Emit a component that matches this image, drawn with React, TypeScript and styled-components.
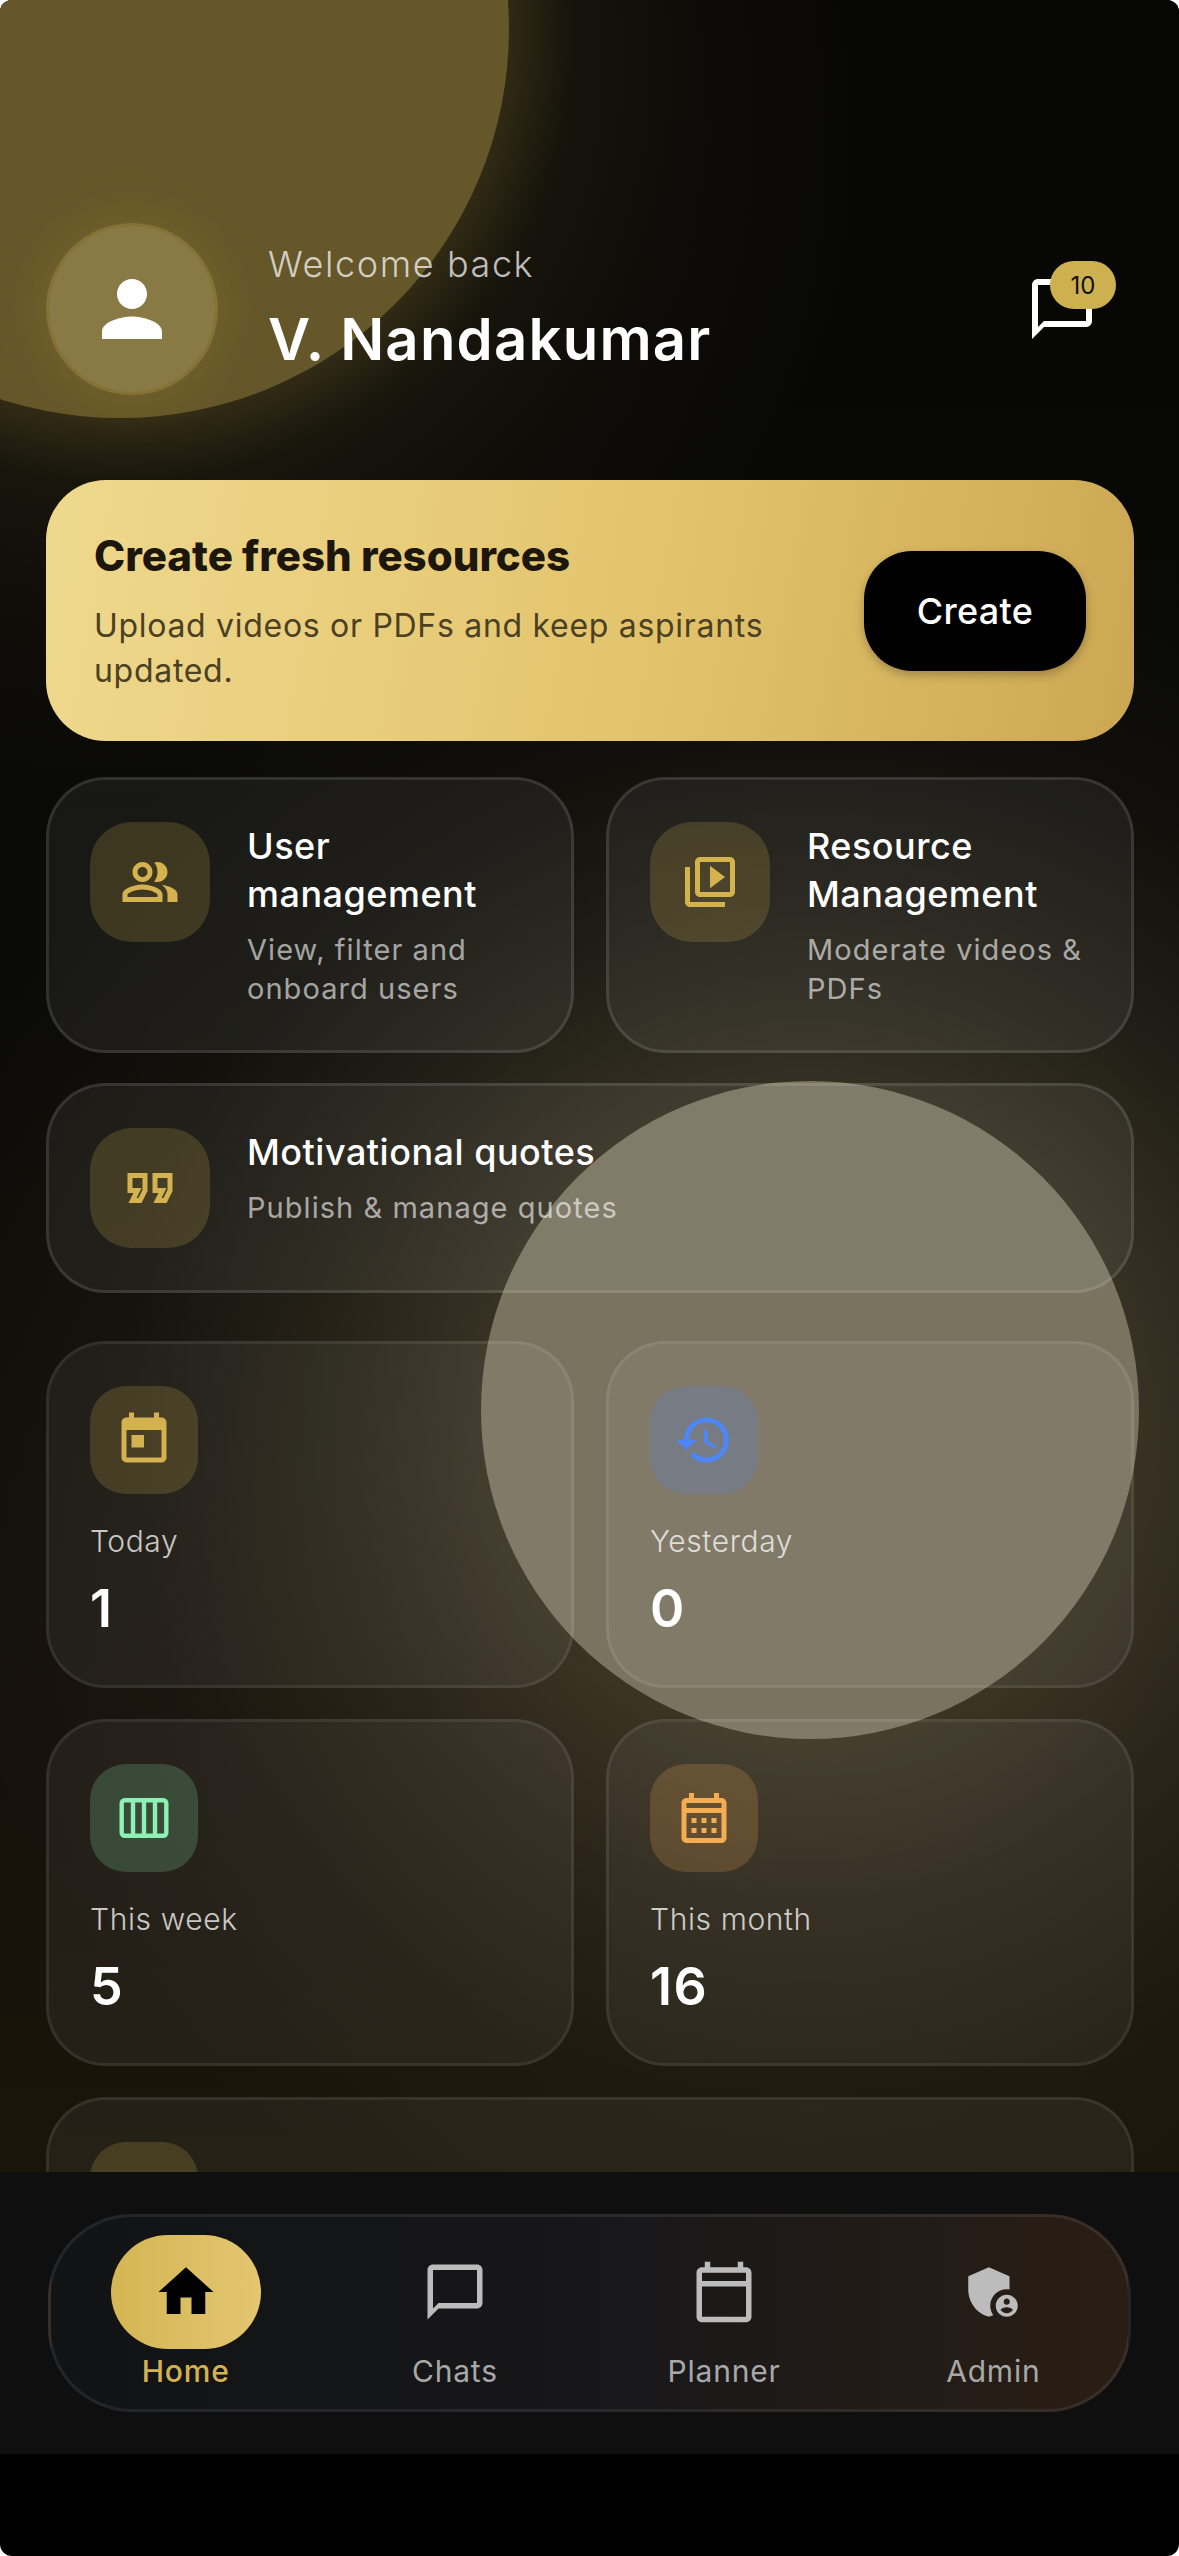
import React from 'react'
import styled, { createGlobalStyle } from 'styled-components'
import {
  MdAdminPanelSettings,
  MdChatBubbleOutline,
  MdHistory,
  MdHome,
  MdOutlineCalendarMonth,
  MdOutlineCalendarToday,
  MdOutlineFormatQuote,
  MdOutlinePeopleAlt,
  MdOutlineVideoLibrary,
  MdPerson,
  MdToday,
} from 'react-icons/md'

const Colors = {
  Gold: '#d4b24f',
  Blue: '#4f86f7',
  Green: '#8df0b4',
  Orange: '#f4ad53',
}

const GlobalStyle = createGlobalStyle`
  html, body {
    margin: 0;
    padding: 0;
    background: #fff;
  }
  * {
    box-sizing: border-box;
  }
`

function WeekIcon() {
  return (
    <svg width="60" height="60" viewBox="0 0 60 60" fill="none" stroke="currentColor" strokeWidth="4.4">
      <rect x="7.7" y="12.2" width="44.6" height="35.6" rx="3" />
      <path d="M19 12v36M30 12v36M41 12v36" />
    </svg>
  )
}

function FeatureCard({ icon, title, text, wide }: { icon: React.ReactNode; title: React.ReactNode; text: React.ReactNode; wide?: boolean }) {
  return (
    <Feature $wide={wide}>
      <FeatureChip>{icon}</FeatureChip>
      <div>
        <FeatureTitle>{title}</FeatureTitle>
        <FeatureText>{text}</FeatureText>
      </div>
    </Feature>
  )
}

function StatCard({ icon, tone, label, value }: { icon: React.ReactNode; tone: string; label: string; value: string }) {
  return (
    <Stat>
      <StatChip $tone={tone}>{icon}</StatChip>
      <StatLabel>{label}</StatLabel>
      <StatValue>{value}</StatValue>
    </Stat>
  )
}

export default function App() {
  return (
    <Phone>
      <GlobalStyle />
      <Screen>
        <TopCircle />
        <MiddleCircle />
        <Header>
          <Avatar>
            <MdPerson size={90} color="#fff" />
          </Avatar>
          <Greeting>
            <Welcome>Welcome back</Welcome>
            <Name>V. Nandakumar</Name>
          </Greeting>
          <Inbox>
            <MdChatBubbleOutline size={72} color="#fff" />
            <Badge>10</Badge>
          </Inbox>
        </Header>

        <Hero>
          <div>
            <HeroTitle>Create fresh resources</HeroTitle>
            <HeroText>Upload videos or PDFs and keep aspirants updated.</HeroText>
          </div>
          <CreateButton>Create</CreateButton>
        </Hero>

        <FeatureGrid>
          <FeatureCard
            icon={<MdOutlinePeopleAlt size={60} />}
            title={<>User<br />management</>}
            text={<>View, filter and<br />onboard users</>}
          />
          <FeatureCard
            icon={<MdOutlineVideoLibrary size={60} />}
            title={<>Resource<br />Management</>}
            text={<>Moderate videos &amp;<br />PDFs</>}
          />
          <FeatureCard
            wide
            icon={<MdOutlineFormatQuote size={60} />}
            title="Motivational quotes"
            text="Publish & manage quotes"
          />
        </FeatureGrid>

        <StatGrid>
          <StatCard icon={<MdToday size={60} />} tone={Colors.Gold} label="Today" value="1" />
          <StatCard icon={<MdHistory size={60} />} tone={Colors.Blue} label="Yesterday" value="0" />
          <StatCard icon={<WeekIcon />} tone={Colors.Green} label="This week" value="5" />
          <StatCard icon={<MdOutlineCalendarMonth size={60} />} tone={Colors.Orange} label="This month" value="16" />
          <StatWide>
            <StatChip $tone={Colors.Gold} />
          </StatWide>
        </StatGrid>
      </Screen>

      <NavBar>
        <NavPill>
          <NavItem $active>
            <NavIcon $active>
              <MdHome size={66} />
            </NavIcon>
            <NavLabel>Home</NavLabel>
          </NavItem>
          <NavItem>
            <NavIcon>
              <MdChatBubbleOutline size={66} />
            </NavIcon>
            <NavLabel>Chats</NavLabel>
          </NavItem>
          <NavItem>
            <NavIcon>
              <MdOutlineCalendarToday size={66} />
            </NavIcon>
            <NavLabel>Planner</NavLabel>
          </NavItem>
          <NavItem>
            <NavIcon>
              <MdAdminPanelSettings size={66} />
            </NavIcon>
            <NavLabel>Admin</NavLabel>
          </NavItem>
        </NavPill>
      </NavBar>
    </Phone>
  )
}

const Phone = styled.div`
  display: flex;
  flex-direction: column;
  width: 1179px;
  height: 2556px;
  overflow: hidden;
  border-radius: 12px;
  background: #000;
  font-family: Inter, 'Liberation Sans', sans-serif;
`

const Screen = styled.main`
  position: relative;
  display: flex;
  flex-direction: column;
  flex: none;
  height: 2172px;
  padding: 223px 45px 0 46px;
  overflow: hidden;
  background:
    radial-gradient(
      circle 780px at 120px 30px,
      rgba(212, 178, 79, 0.2) 50%,
      rgba(212, 178, 79, 0.08) 58%,
      rgba(212, 178, 79, 0.03) 74%,
      rgba(212, 178, 79, 0) 100%
    ),
    radial-gradient(
      circle 900px at 809px 1410px,
      rgba(205, 185, 135, 0.21) 36%,
      rgba(205, 185, 135, 0.11) 56%,
      rgba(205, 185, 135, 0.035) 76%,
      rgba(205, 185, 135, 0) 100%
    ),
    linear-gradient(180deg, #060605 0%, #0a0a07 45%, #15110a 80%, #1a150a 100%);

  & > *:not(:nth-child(-n + 2)) {
    position: relative;
    flex: none;
  }
`

const TopCircle = styled.div`
  position: absolute;
  top: -360px;
  left: -269px;
  width: 778px;
  height: 778px;
  border-radius: 50%;
  background: #655729;
`

const MiddleCircle = styled.div`
  position: absolute;
  top: 1081px;
  left: 481px;
  width: 658px;
  height: 658px;
  border-radius: 50%;
  background: #7a7360;
`

const Header = styled.header`
  display: flex;
  align-items: center;
  height: 172px;
`

const Avatar = styled.div`
  display: flex;
  flex: none;
  align-items: center;
  justify-content: center;
  width: 172px;
  height: 172px;
  border: 3px solid rgba(212, 178, 79, 0.3);
  border-radius: 50%;
  background: rgba(255, 240, 160, 0.235);
  background-clip: padding-box;
  box-shadow: 0 0 60px rgba(212, 178, 79, 0.16);
`

const Greeting = styled.div`
  display: flex;
  flex-direction: column;
  margin-left: 50px;
  transform: translateY(-2px);
`

const Welcome = styled.span`
  font-size: 36px;
  font-weight: 300;
  line-height: 48px;
  letter-spacing: 1.6px;
  color: rgba(255, 255, 255, 0.72);
`

const Name = styled.span`
  margin-top: 15px;
  font-size: 58px;
  font-weight: 600;
  line-height: 72px;
  letter-spacing: 1.2px;
  color: #fff;
`

const Inbox = styled.div`
  position: relative;
  display: flex;
  margin-left: auto;
  margin-right: 36px;
`

const Badge = styled.span`
  position: absolute;
  top: -12px;
  right: -18px;
  display: flex;
  align-items: center;
  justify-content: center;
  width: 66px;
  height: 48px;
  border-radius: 24px;
  background: #cdb050;
  font-size: 24px;
  font-weight: 400;
  color: #111;
`

const Hero = styled.section`
  display: flex;
  align-items: center;
  justify-content: space-between;
  height: 261px;
  margin-top: 85px;
  padding: 0 48px;
  border-radius: 60px;
  background: linear-gradient(100deg, #efd98e 0%, #e3c46d 55%, #cca753 100%);
`

const HeroTitle = styled.h2`
  margin: 0;
  font-size: 42px;
  font-weight: 800;
  line-height: 54px;
  color: #1c170a;
`

const HeroText = styled.p`
  width: 700px;
  margin: 20px 0 0;
  font-size: 32px;
  line-height: 45px;
  letter-spacing: 0.7px;
  color: #4b4122;
`

const CreateButton = styled.button`
  flex: none;
  width: 222px;
  height: 120px;
  border: 0;
  border-radius: 48px;
  background: #000;
  box-shadow: 0 4px 10px rgba(0, 0, 0, 0.25);
  font-family: inherit;
  font-size: 36px;
  font-weight: 500;
  letter-spacing: 0.3px;
  color: #fff;
`

const FeatureGrid = styled.div`
  display: grid;
  grid-template-columns: 1fr 1fr;
  gap: 30px 32px;
  margin-top: 36px;
`

const Feature = styled.article<{ $wide?: boolean }>`
  display: flex;
  grid-column: ${(props) => (props.$wide ? '1 / -1' : 'auto')};
  gap: 37px;
  padding: 42px 41px;
  border: 3px solid rgba(255, 255, 255, 0.11);
  border-radius: 60px;
  background: rgba(255, 255, 255, 0.06);
`

const FeatureChip = styled.div`
  display: flex;
  flex: none;
  align-items: center;
  justify-content: center;
  width: 120px;
  height: 120px;
  border-radius: 42px;
  background: rgba(212, 178, 79, 0.2);
  color: ${Colors.Gold};
`

const FeatureTitle = styled.h3`
  margin: 0;
  font-size: 36px;
  font-weight: 500;
  line-height: 48px;
  letter-spacing: 0.5px;
  color: #fff;
`

const FeatureText = styled.p`
  margin: 12px 0 0;
  font-size: 29px;
  font-weight: 400;
  line-height: 39px;
  letter-spacing: 1.05px;
  color: rgba(255, 255, 255, 0.6);
`

const StatGrid = styled.div`
  display: grid;
  grid-template-columns: 1fr 1fr;
  gap: 31px 32px;
  margin-top: 48px;
`

const Stat = styled.article`
  height: 347px;
  padding: 42px 41px;
  border: 3px solid rgba(255, 255, 255, 0.08);
  border-radius: 60px;
  background: rgba(255, 255, 255, 0.055);
`

const StatWide = styled(Stat)`
  grid-column: 1 / -1;
`

const StatChip = styled.div<{ $tone: string }>`
  position: relative;
  display: flex;
  align-items: center;
  justify-content: center;
  width: 108px;
  height: 108px;
  border-radius: 36px;
  color: ${(props) => props.$tone};

  &::before {
    content: '';
    position: absolute;
    inset: 0;
    border-radius: inherit;
    background: currentColor;
    opacity: 0.2;
  }

  & > svg {
    position: relative;
  }
`

const StatLabel = styled.div`
  margin-top: 28px;
  font-size: 30px;
  font-weight: 300;
  line-height: 39px;
  letter-spacing: 0.6px;
  color: rgba(255, 255, 255, 0.75);
`

const StatValue = styled.div`
  margin-top: 18px;
  font-size: 52px;
  font-weight: 600;
  line-height: 60px;
  letter-spacing: 1.5px;
  color: #fff;
`

const NavBar = styled.nav`
  flex: none;
  height: 282px;
  padding: 42px 48px 0;
  background: #0f0f0f;
`

const NavPill = styled.div`
  display: grid;
  grid-template-columns: repeat(4, 1fr);
  height: 198px;
  padding-top: 18px;
  border: 3px solid rgba(255, 255, 255, 0.08);
  border-radius: 84px;
  background: linear-gradient(90deg, #121315 0%, #17171a 50%, #2a1e14 100%);
`

const NavItem = styled.div<{ $active?: boolean }>`
  display: flex;
  flex-direction: column;
  align-items: center;
  font-weight: ${(props) => (props.$active ? 500 : 400)};
  color: ${(props) => (props.$active ? Colors.Gold : '#a8a8a8')};
`

const NavIcon = styled.div<{ $active?: boolean }>`
  display: flex;
  align-items: center;
  justify-content: center;
  width: 150px;
  height: 114px;
  border-radius: 57px;
  background: ${(props) => (props.$active ? 'linear-gradient(90deg, #d4b654, #e3c670)' : 'transparent')};
  color: ${(props) => (props.$active ? '#000' : '#bcbcbc')};
`

const NavLabel = styled.span`
  margin-top: 3px;
  font-size: 30px;
  line-height: 39px;
  letter-spacing: 0.8px;
`
